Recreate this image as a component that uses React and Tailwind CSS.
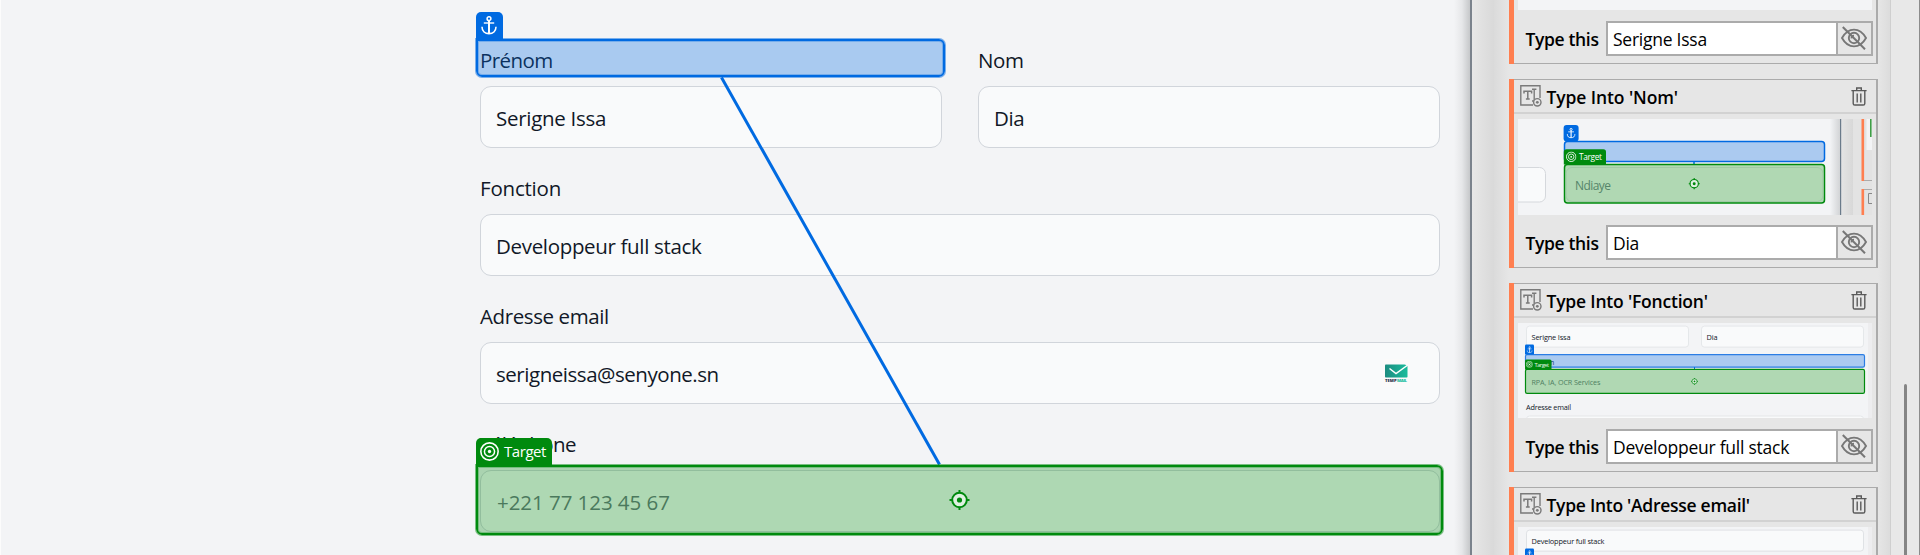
const UI = "'Open Sans','Noto Sans',sans-serif";

const fields = [
  { label: 'Fonction', value: 'Developpeur full stack', lt: 'tracking-[-0.2px]', vt: 'tracking-[-0.33px]' },
  { label: 'Adresse email', value: 'serigneissa@senyone.sn', lt: 'tracking-[-0.4px]', vt: 'tracking-[-0.46px]', mail: true },
  { label: 'Téléphone', value: '+221 77 123 45 67', lt: 'tracking-[-0.55px]', vt: 'tracking-[-0.05px] pl-px', placeholder: true },
];

function Field({ label, value, lt = '', vt = '', mail, placeholder }) {
  return (
    <div className="flex-1">
      <div className={`h-10 text-[20.5px] leading-7 text-[#111827] ${lt}`}>{label}</div>
      <div className="flex h-[62px] items-center justify-between rounded-[11px] border border-[#d1d5db] bg-[#f9fafb] pl-[15px] pr-[29px] pt-0.5">
        <span className={`text-[20.5px] leading-7 ${placeholder ? 'text-[#6b7280]' : 'text-[#111827]'} ${vt}`}>{value}</span>
        {mail && <TempMail />}
      </div>
    </div>
  );
}

function TempMail() {
  return (
    <svg width="28" height="28" viewBox="0 0 28 28" className="-mt-0.5">
      <defs>
        <linearGradient id="tm" x1="0" x2="1">
          <stop offset="0" stopColor="#1d8c80" />
          <stop offset="1" stopColor="#1abc9c" />
        </linearGradient>
      </defs>
      <rect width="28" height="28" rx="3" fill="#fbfafa" />
      <rect x="3" y="5.5" width="22.5" height="13" rx="0.8" fill="url(#tm)" />
      <path d="M7.5 9.5 L14 14.5 L25.8 6" fill="none" stroke="#fff" strokeWidth="1.5" />
      <path d="M22.5 5 L26 5 L26 7.2 Z" fill="#fbfafa" />
      <text x="3" y="23.2" fontSize="4.2" fontWeight="800" fontFamily={UI} fill="#1e2b45" textLength="11.6">TEMP</text>
      <text x="15" y="23.2" fontSize="4.2" fontWeight="800" fontFamily={UI} fill="#1abc9c" textLength="10">MAIL</text>
    </svg>
  );
}

function AnchorGlyph() {
  return (
    <g fill="none" stroke="#fff" strokeWidth="1.5">
      <circle cx="8" cy="2.7" r="1.9" />
      <path d="M8 4.6 V17.4" strokeWidth="2" />
      <path d="M2.8 7 H13.2" strokeWidth="1.4" />
      <path d="M1 10.8 C1 15.2 4.2 17.6 8 17.6 C11.8 17.6 15 15.2 15 10.8" strokeWidth="1.6" />
    </g>
  );
}

function RingsGlyph() {
  return (
    <g fill="none" stroke="#fff">
      <circle cx="9" cy="9" r="8.2" strokeWidth="1.5" />
      <circle cx="9" cy="9" r="4.8" strokeWidth="1.4" />
      <circle cx="9" cy="9" r="1.6" fill="#fff" stroke="none" />
    </g>
  );
}

function CrosshairGlyph() {
  return (
    <g fill="none" stroke="#008a0e" strokeWidth="2">
      <circle cx="10" cy="10" r="7.3" fill="#e0f0e2" />
      <circle cx="10" cy="10" r="2.6" fill="#008a0e" stroke="none" />
      <path d="M10 0 V3.2 M10 16.8 V20 M0 10 H3.2 M16.8 10 H20" />
    </g>
  );
}

function TypeIntoIcon() {
  return (
    <svg width="22" height="22" viewBox="0 0 22 22" fill="none" stroke="#7a7a7a" strokeWidth="1.4">
      <path d="M13 20 H0.8 V0.8 H20 V13" />
      <path d="M4 8.5 V6.3 H11.6 V8.5 M7.8 6.3 V13.8 M5.9 14 H9.7" strokeWidth="1.5" />
      <path d="M12 4.3 H16.4 M14.2 4.3 V15.8 M12 16 H14.4" />
      <circle cx="17.3" cy="17.3" r="3.7" fill="#e6e6e6" />
      <circle cx="17.3" cy="17.3" r="1.4" fill="#7a7a7a" stroke="none" />
    </svg>
  );
}

function TrashIcon() {
  return (
    <svg width="16" height="19" viewBox="0 0 16 19" fill="none" stroke="#5a5a5a" strokeWidth="1.4">
      <path d="M0.4 3.6 H15.6 M5.7 3.4 V1 H10.3 V3.4" />
      <path d="M2.2 3.8 V16.4 Q2.2 18 3.8 18 H12.2 Q13.8 18 13.8 16.4 V3.8" />
      <path d="M6.2 6.6 V15.4 M9.8 6.6 V15.4" />
    </svg>
  );
}

function EyeOffIcon() {
  return (
    <svg width="26" height="24" viewBox="0 0 26 24" fill="none" stroke="#777777" strokeWidth="1.9">
      <path d="M1 12 C4 6.6 8.2 3.6 13 3.6 C17.8 3.6 22 6.6 25 12 C22 17.4 17.8 20.4 13 20.4 C8.2 20.4 4 17.4 1 12 Z" />
      <circle cx="13" cy="12" r="5.2" />
      <path d="M10.6 12.4 A2.4 2.4 0 0 1 13 9.6" />
      <path d="M1.8 1 L24 23.2" strokeWidth="2" />
    </svg>
  );
}

function ThumbNom() {
  return (
    <svg width="354" height="96" viewBox="0 0 354 96" fontFamily={UI}>
      <defs>
        <linearGradient id="edge"><stop offset="0" stopColor="#f3f4f6" /><stop offset="1" stopColor="#d2d4d6" /></linearGradient>
        <linearGradient id="pane"><stop offset="0" stopColor="#e5e5e5" /><stop offset="1" stopColor="#d8d8d8" /></linearGradient>
      </defs>
      <rect width="354" height="96" fill="#f3f4f6" />
      <rect x="-20" y="48.5" width="47.5" height="34.5" rx="6" fill="#f9fafb" stroke="#d5d8dc" />
      <rect x="46.5" y="22.5" width="260" height="20" rx="3" fill="#abcaf0" stroke="#006ae1" strokeWidth="1.5" />
      <rect x="45.6" y="6" width="15" height="16.5" rx="3" fill="#006ae1" />
      <svg x="48.6" y="8.6" width="9" height="11" viewBox="0 0 16 18.5"><AnchorGlyph /></svg>
      <path d="M176 42 V46" stroke="#006ae1" strokeWidth="1.5" />
      <rect x="46.5" y="45.5" width="260" height="38.5" rx="3" fill="#b0d8b3" stroke="#008a0e" strokeWidth="1.5" />
      <rect x="48" y="48.5" width="257" height="34" rx="6" fill="none" stroke="#9cc8a2" strokeWidth="0.8" />
      <path d="M45.8 45.5 V33 Q45.8 30.3 48.5 30.3 H85.4 Q88 30.3 88 33 V45.5 Z" fill="#008a0e" />
      <svg x="48" y="32.6" width="10.4" height="10.4" viewBox="0 0 18 18"><RingsGlyph /></svg>
      <text x="61" y="41.1" fontSize="8.3" fill="#fff" textLength="23">Target</text>
      <text x="57" y="70.8" fontSize="12" fill="#55856a" textLength="36">Ndiaye</text>
      <svg x="170.5" y="59" width="11.4" height="11.4" viewBox="0 0 20 20"><CrosshairGlyph /></svg>
      <rect x="312" y="0" width="10" height="96" fill="url(#edge)" />
      <rect x="323" y="0" width="31" height="96" fill="#e3e3e3" />
      <rect x="323" y="0" width="12" height="96" fill="url(#pane)" />
      <rect x="322" y="0" width="1.2" height="96" fill="#6b7b8b" />
      <rect x="343.5" y="0" width="2.6" height="62" fill="#ff7f50" />
      <rect x="348.5" y="0" width="6" height="31" fill="#f3f4f6" />
      <rect x="352" y="0" width="1.6" height="18" fill="#3f9e47" />
      <rect x="346" y="61" width="8" height="1" fill="#ababab" />
      <rect x="343.5" y="70" width="2.6" height="26" fill="#ff7f50" />
      <rect x="346" y="70" width="8" height="1" fill="#ababab" />
      <path d="M354 74.5 H350.5 V84.5 H354" fill="none" stroke="#888" />
    </svg>
  );
}

function ThumbFonction() {
  return (
    <svg width="354" height="95" viewBox="0 -0.6 354 95" fontFamily={UI}>
      <rect y="-1" width="354" height="96" fill="#f3f4f6" />
      <rect x="8.5" y="2.5" width="162" height="21" rx="3" fill="#f9fafb" stroke="#e1e3e6" strokeWidth="0.8" />
      <rect x="183.5" y="2.5" width="162" height="21" rx="3" fill="#f9fafb" stroke="#e1e3e6" strokeWidth="0.8" />
      <text x="13.5" y="16.3" fontSize="7.4" fill="#111827" textLength="39">Serigne Issa</text>
      <text x="188.5" y="16.3" fontSize="7.4" fill="#111827" textLength="11">Dia</text>
      <rect x="7.5" y="31" width="339" height="12.6" rx="1.6" fill="#abcaf0" stroke="#2b7de4" strokeWidth="1.2" />
      <text x="32" y="41" fontSize="7" fill="#123a70">n</text>
      <rect x="7" y="21" width="9" height="10" rx="1.2" fill="#006ae1" />
      <svg x="8.6" y="22.6" width="6" height="7" viewBox="0 0 16 18.5"><AnchorGlyph /></svg>
      <path d="M176.5 43.5 V45.5" stroke="#006ae1" />
      <rect x="7.5" y="45.8" width="339" height="24" rx="1.6" fill="#b0d8b3" stroke="#008a0e" strokeWidth="1.2" />
      <path d="M7 45.8 V37.5 Q7 36 8.5 36 H32 Q33.5 36 33.5 37.5 V45.8 Z" fill="#008a0e" />
      <svg x="8" y="37.4" width="6.8" height="6.8" viewBox="0 0 18 18"><RingsGlyph /></svg>
      <text x="16.5" y="43.3" fontSize="5.8" fill="#e4f4e5" textLength="14.5">Target</text>
      <text x="13.5" y="61.3" fontSize="7.2" fill="#4f7f62" textLength="69">RPA, IA, OCR Services</text>
      <svg x="173" y="54.3" width="7" height="7" viewBox="0 0 20 20"><CrosshairGlyph /></svg>
      <text x="8" y="86.3" fontSize="7.3" fill="#111827" textLength="45">Adresse email</text>
      <rect x="8.5" y="92.4" width="337" height="20" rx="3" fill="#f9fafb" stroke="#e1e3e6" strokeWidth="0.8" />
      <rect x="350" y="-1" width="4" height="96" fill="#ededef" />
    </svg>
  );
}

function ThumbEmail() {
  return (
    <svg width="354" height="95" viewBox="0 -0.6 354 95" fontFamily={UI}>
      <rect y="-1" width="354" height="96" fill="#f3f4f6" />
      <rect x="8.5" y="2.5" width="337" height="21" rx="3" fill="#f9fafb" stroke="#d9dce0" strokeWidth="0.8" />
      <text x="13.5" y="16.3" fontSize="7.4" fill="#111827" textLength="73">Developpeur full stack</text>
      <rect x="7" y="21" width="9" height="10" rx="1.2" fill="#006ae1" />
      <svg x="8.6" y="22.6" width="6" height="7" viewBox="0 0 16 18.5"><AnchorGlyph /></svg>
      <rect x="350" y="-1" width="4" height="96" fill="#ededef" />
    </svg>
  );
}

const Blank = () => (
  <svg width="354" height="95" viewBox="0 0 354 95"><rect width="354" height="95" fill="#f3f4f6" /></svg>
);

const activities = [
  { id: 1, Thumb: Blank, text: 'Serigne Issa', xt: 'tracking-[-0.25px]' },
  { id: 2, name: "Type Into 'Nom'", tt: 'tracking-[-0.1px]', Thumb: ThumbNom, text: 'Dia', xt: 'tracking-[-0.25px]' },
  { id: 3, name: "Type Into 'Fonction'", tt: 'tracking-[-0.2px]', Thumb: ThumbFonction, text: 'Developpeur full stack', xt: 'tracking-[-0.25px]' },
  { id: 4, name: "Type Into 'Adresse email'", tt: 'tracking-[-0.28px]', Thumb: ThumbEmail },
];

function Activity({ name, tt = '', Thumb, text, xt = '' }) {
  return (
    <div className="flex h-[189px] w-[369px] shrink-0">
      <div className="w-[4.5px] shrink-0 bg-[#ff7f50]" />
      <div className="flex flex-1 flex-col border-y-[1.5px] border-r-2 border-[#ababab] bg-[#e6e6e6]">
        <div className="flex h-[34px] shrink-0 items-center border-b-2 border-[#d2d2d2] pl-1.5 pr-[9px]">
          {name && (
            <>
              <TypeIntoIcon />
              <span className={`ml-[5px] flex-1 whitespace-nowrap pt-px text-[17.5px] font-semibold leading-6 text-black ${tt}`}>{name}</span>
              <TrashIcon />
            </>
          )}
        </div>
        <div className="ml-1 mt-[5px] h-[96px] shrink-0 overflow-hidden"><Thumb /></div>
        {text && (
          <div className="mt-[9.5px] flex h-[35px] items-stretch pl-3 pr-[3.5px]">
            <div className="w-[80.5px] whitespace-nowrap pt-[6.5px] text-[17.5px] font-semibold leading-6 tracking-[-0.35px] text-black">Type this</div>
            <div className={`w-[232px] whitespace-nowrap border-2 border-[#ababab] bg-white pl-[5px] pt-1 text-[17.5px] leading-6 text-black ${xt}`}>{text}</div>
            <div className="flex flex-1 items-center justify-center border-y-2 border-r-2 border-[#ababab]">
              <EyeOffIcon />
            </div>
          </div>
        )}
      </div>
    </div>
  );
}

export default function App() {
  return (
    <div className="flex h-[555px] w-[1920px] overflow-hidden bg-[#e6e6e6]" style={{ fontFamily: UI }}>
      <section className="relative flex w-[1470px] shrink-0 justify-between overflow-hidden border-l border-[#fcfcfc] bg-[#f3f4f6]">
        <div className="ml-[479px] flex w-[960px] flex-col gap-[26px] pt-[46px]">
          <div className="flex gap-9">
            <Field label="Prénom" value="Serigne Issa" lt="tracking-[-0.6px]" vt="tracking-[-0.28px]" />
            <Field label="Nom" value="Dia" lt="tracking-[-0.4px]" vt="tracking-[-0.4px]" />
          </div>
          {fields.map((f) => (
            <div key={f.label} className="flex"><Field {...f} /></div>
          ))}
        </div>
        <div className="w-4 bg-linear-to-r from-[#f3f4f6] via-[#e6e7e9] to-[#c6c8ca]" />

        <div className="absolute left-[475px] top-[39px] h-[38px] w-[468.5px] rounded-[6px] rounded-tl-none border-2 border-[#006ae1] bg-[#006ae1]/30 shadow-[0_0_0_1px_rgba(0,106,225,0.5),inset_0_0_0_1px_rgba(0,106,225,0.3)]" />
        <div className="absolute left-[474.5px] top-[11.5px] flex h-[27.5px] w-[27px] items-center justify-center rounded-t-[5px] bg-[#006ae1]">
          <svg width="16" height="18.5" viewBox="0 0 16 18.5"><AnchorGlyph /></svg>
        </div>
        <svg className="absolute left-0 top-0" width="1440" height="470" viewBox="1 0 1440 470">
          <path d="M721.5 77.5 L939.5 464.5" stroke="#006ae1" strokeWidth="3" />
        </svg>
        <div className="absolute left-[475px] top-[465px] h-[70px] w-[967px] rounded-[6px] rounded-tl-none border-2 border-[#008a0e] bg-[#008a0e]/30 shadow-[0_0_0_1px_rgba(0,138,14,0.5),inset_0_0_0_1px_rgba(0,138,14,0.3)]" />
        <div className="absolute left-[474.5px] top-[437.5px] flex h-[27.5px] w-[76.5px] items-center gap-[5.5px] rounded-t-[5px] bg-[#008a0e] pl-1">
          <svg width="19" height="19" viewBox="0 0 18 18"><RingsGlyph /></svg>
          <span className="-mt-px text-[15px] leading-5 tracking-[-0.45px] text-white">Target</span>
        </div>
        <svg className="absolute left-[948px] top-[490px]" width="21" height="20" viewBox="0 0 20 20"><CrosshairGlyph /></svg>
      </section>

      <div className="w-0.5 shrink-0 bg-[#7a828c]" />
      <aside className="flex flex-1">
        <div className="w-[22px] bg-linear-to-r from-[#e7e7e7] to-[#d9d9d9]" />
        <div className="w-[15px] bg-linear-to-r from-[#dbdbdb] to-[#e6e6e6]" />
        <div className="-mt-[125px] flex flex-col gap-[15px]">
          {activities.map((a) => <Activity key={a.id} {...a} />)}
        </div>
        <div className="w-[13px] border-r border-[#cfcfcf] bg-linear-to-r from-[#e6e6e6] to-[#dcdcdc]" />
        <div className="flex flex-1 justify-end border-r border-[#8c8c8c] bg-[#e8e8e8] pr-3 pt-96">
          <div className="h-full w-[3.5px] rounded-t-full bg-[#858585]" />
        </div>
      </aside>
    </div>
  );
}
